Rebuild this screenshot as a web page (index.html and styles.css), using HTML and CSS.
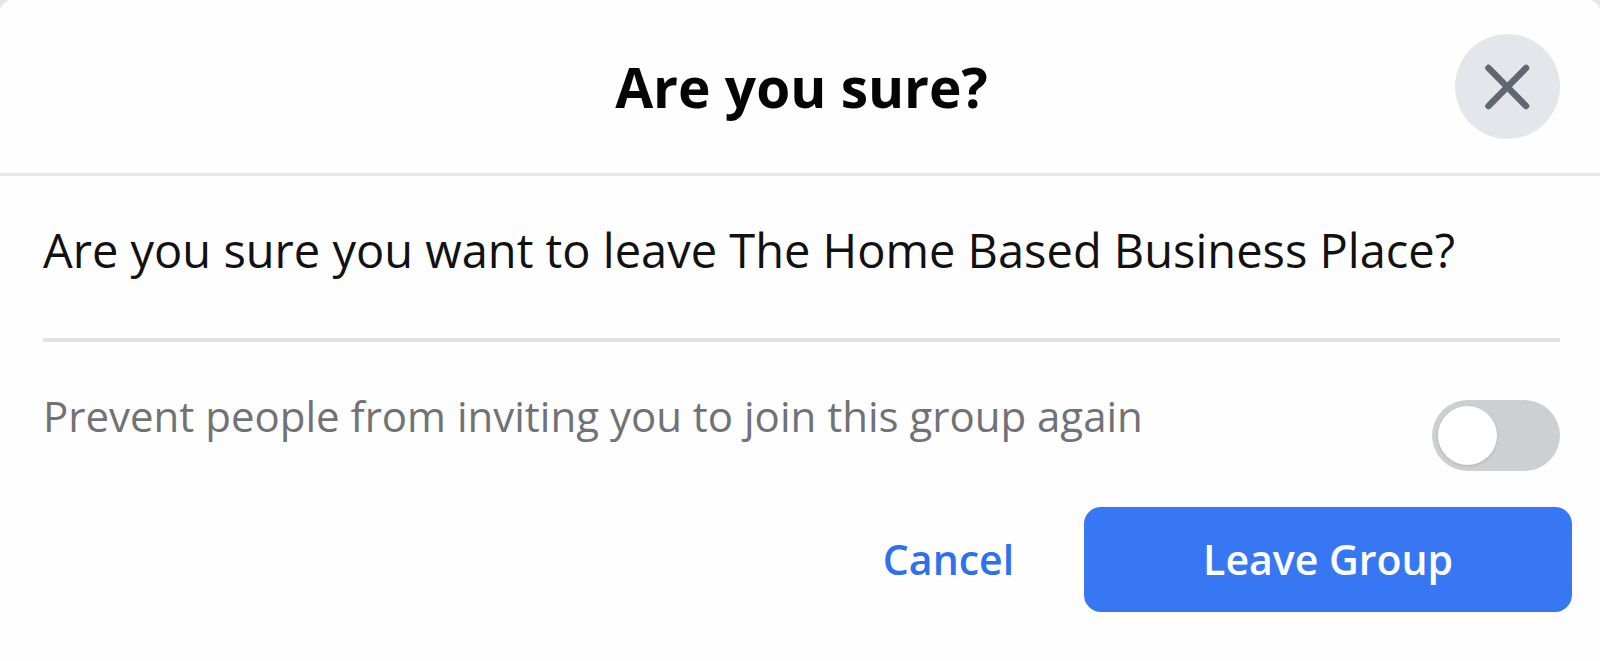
FILE: index.html
```
<!DOCTYPE html>
<html lang="en">
<head>
  <meta charset="UTF-8" />
  <meta name="viewport" content="width=device-width, initial-scale=1.0" />
  <title>Are you sure?</title>
  <link rel="stylesheet" href="styles.css">
</head>
<body>
  <div class="dialog" role="dialog" aria-labelledby="dialog-title">
    <div class="dialog-header">
      <h1 id="dialog-title">Are you sure?</h1>
      <button class="close" type="button" aria-label="Close">
        <svg viewBox="0 0 105 105" width="105" height="105">
          <path d="M33.5 34 L71 72 M71 34 L33.5 72" />
        </svg>
      </button>
    </div>

    <div class="dialog-body">
      <p class="question">Are you sure you want to leave The Home Based Business Place?</p>
      <div class="option">
        <label for="prevent">Prevent people from inviting you to join this group again</label>
        <input id="prevent" class="toggle" type="checkbox">
      </div>
    </div>

    <div class="dialog-footer">
      <button class="btn cancel" type="button">Cancel</button>
      <button class="btn leave" type="button">Leave Group</button>
    </div>
  </div>
</body>
</html>
```
FILE: styles.css
```
* {
  box-sizing: border-box;
}
body {
  margin: 0;
  background: #e6e6e6;
  font-family: "Segoe UI", "Open Sans", "Noto Sans", sans-serif;
}
.dialog {
  min-height: 100vh;
  background: #fefefe;
  border-radius: 12px 12px 0 0;
}
.dialog-header {
  display: grid;
  grid-template-columns: 105px 1fr 105px;
  align-items: center;
  padding: 34px 40px 34px 43px;
  border-bottom: 3px solid #e6e6e6;
}
.dialog-header h1 {
  grid-column: 2;
  margin: 0;
  font-size: 55px;
  line-height: 72px;
  font-weight: 700;
  text-align: center;
  color: #050505;
}
.close {
  width: 105px;
  height: 105px;
  padding: 0;
  border: none;
  border-radius: 50%;
  background: #e4e6eb;
  cursor: pointer;
}
.close svg {
  display: block;
  fill: none;
  stroke: #606770;
  stroke-width: 6.5;
  stroke-linecap: round;
}
.dialog-body {
  padding: 38px 40px 36px 43px;
}
.question {
  margin: 0;
  padding-bottom: 52px;
  border-bottom: 4px solid #e1e1e1;
  font-size: 47px;
  line-height: 72px;
  color: #111;
}
.option {
  display: flex;
  justify-content: space-between;
  align-items: flex-end;
  padding-top: 38px;
}
.option label {
  padding-bottom: 19px;
  font-size: 42px;
  line-height: 72px;
  color: #707275;
}
.toggle {
  appearance: none;
  flex: none;
  width: 128px;
  height: 71px;
  margin: 0;
  padding: 6px;
  border-radius: 36px;
  background: #cdcfd3;
  cursor: pointer;
}
.toggle::before {
  content: "";
  display: block;
  width: 59px;
  height: 59px;
  border-radius: 50%;
  background: #fff;
  box-shadow: 0 1px 3px rgba(0, 0, 0, 0.15);
}
.toggle:checked {
  background: #3777f3;
}
.toggle:checked::before {
  margin-left: auto;
}
.dialog-footer {
  display: flex;
  justify-content: flex-end;
  padding: 0 28px 48px;
}
.btn {
  height: 105px;
  border: none;
  border-radius: 17px;
  font-family: inherit;
  font-size: 41px;
  font-weight: 600;
  cursor: pointer;
}
.cancel {
  padding: 0 70px 2px;
  background: none;
  color: #2f70f0;
}
.leave {
  padding: 0 119px 2px;
  background: #3777f3;
  color: #fff;
}
```
